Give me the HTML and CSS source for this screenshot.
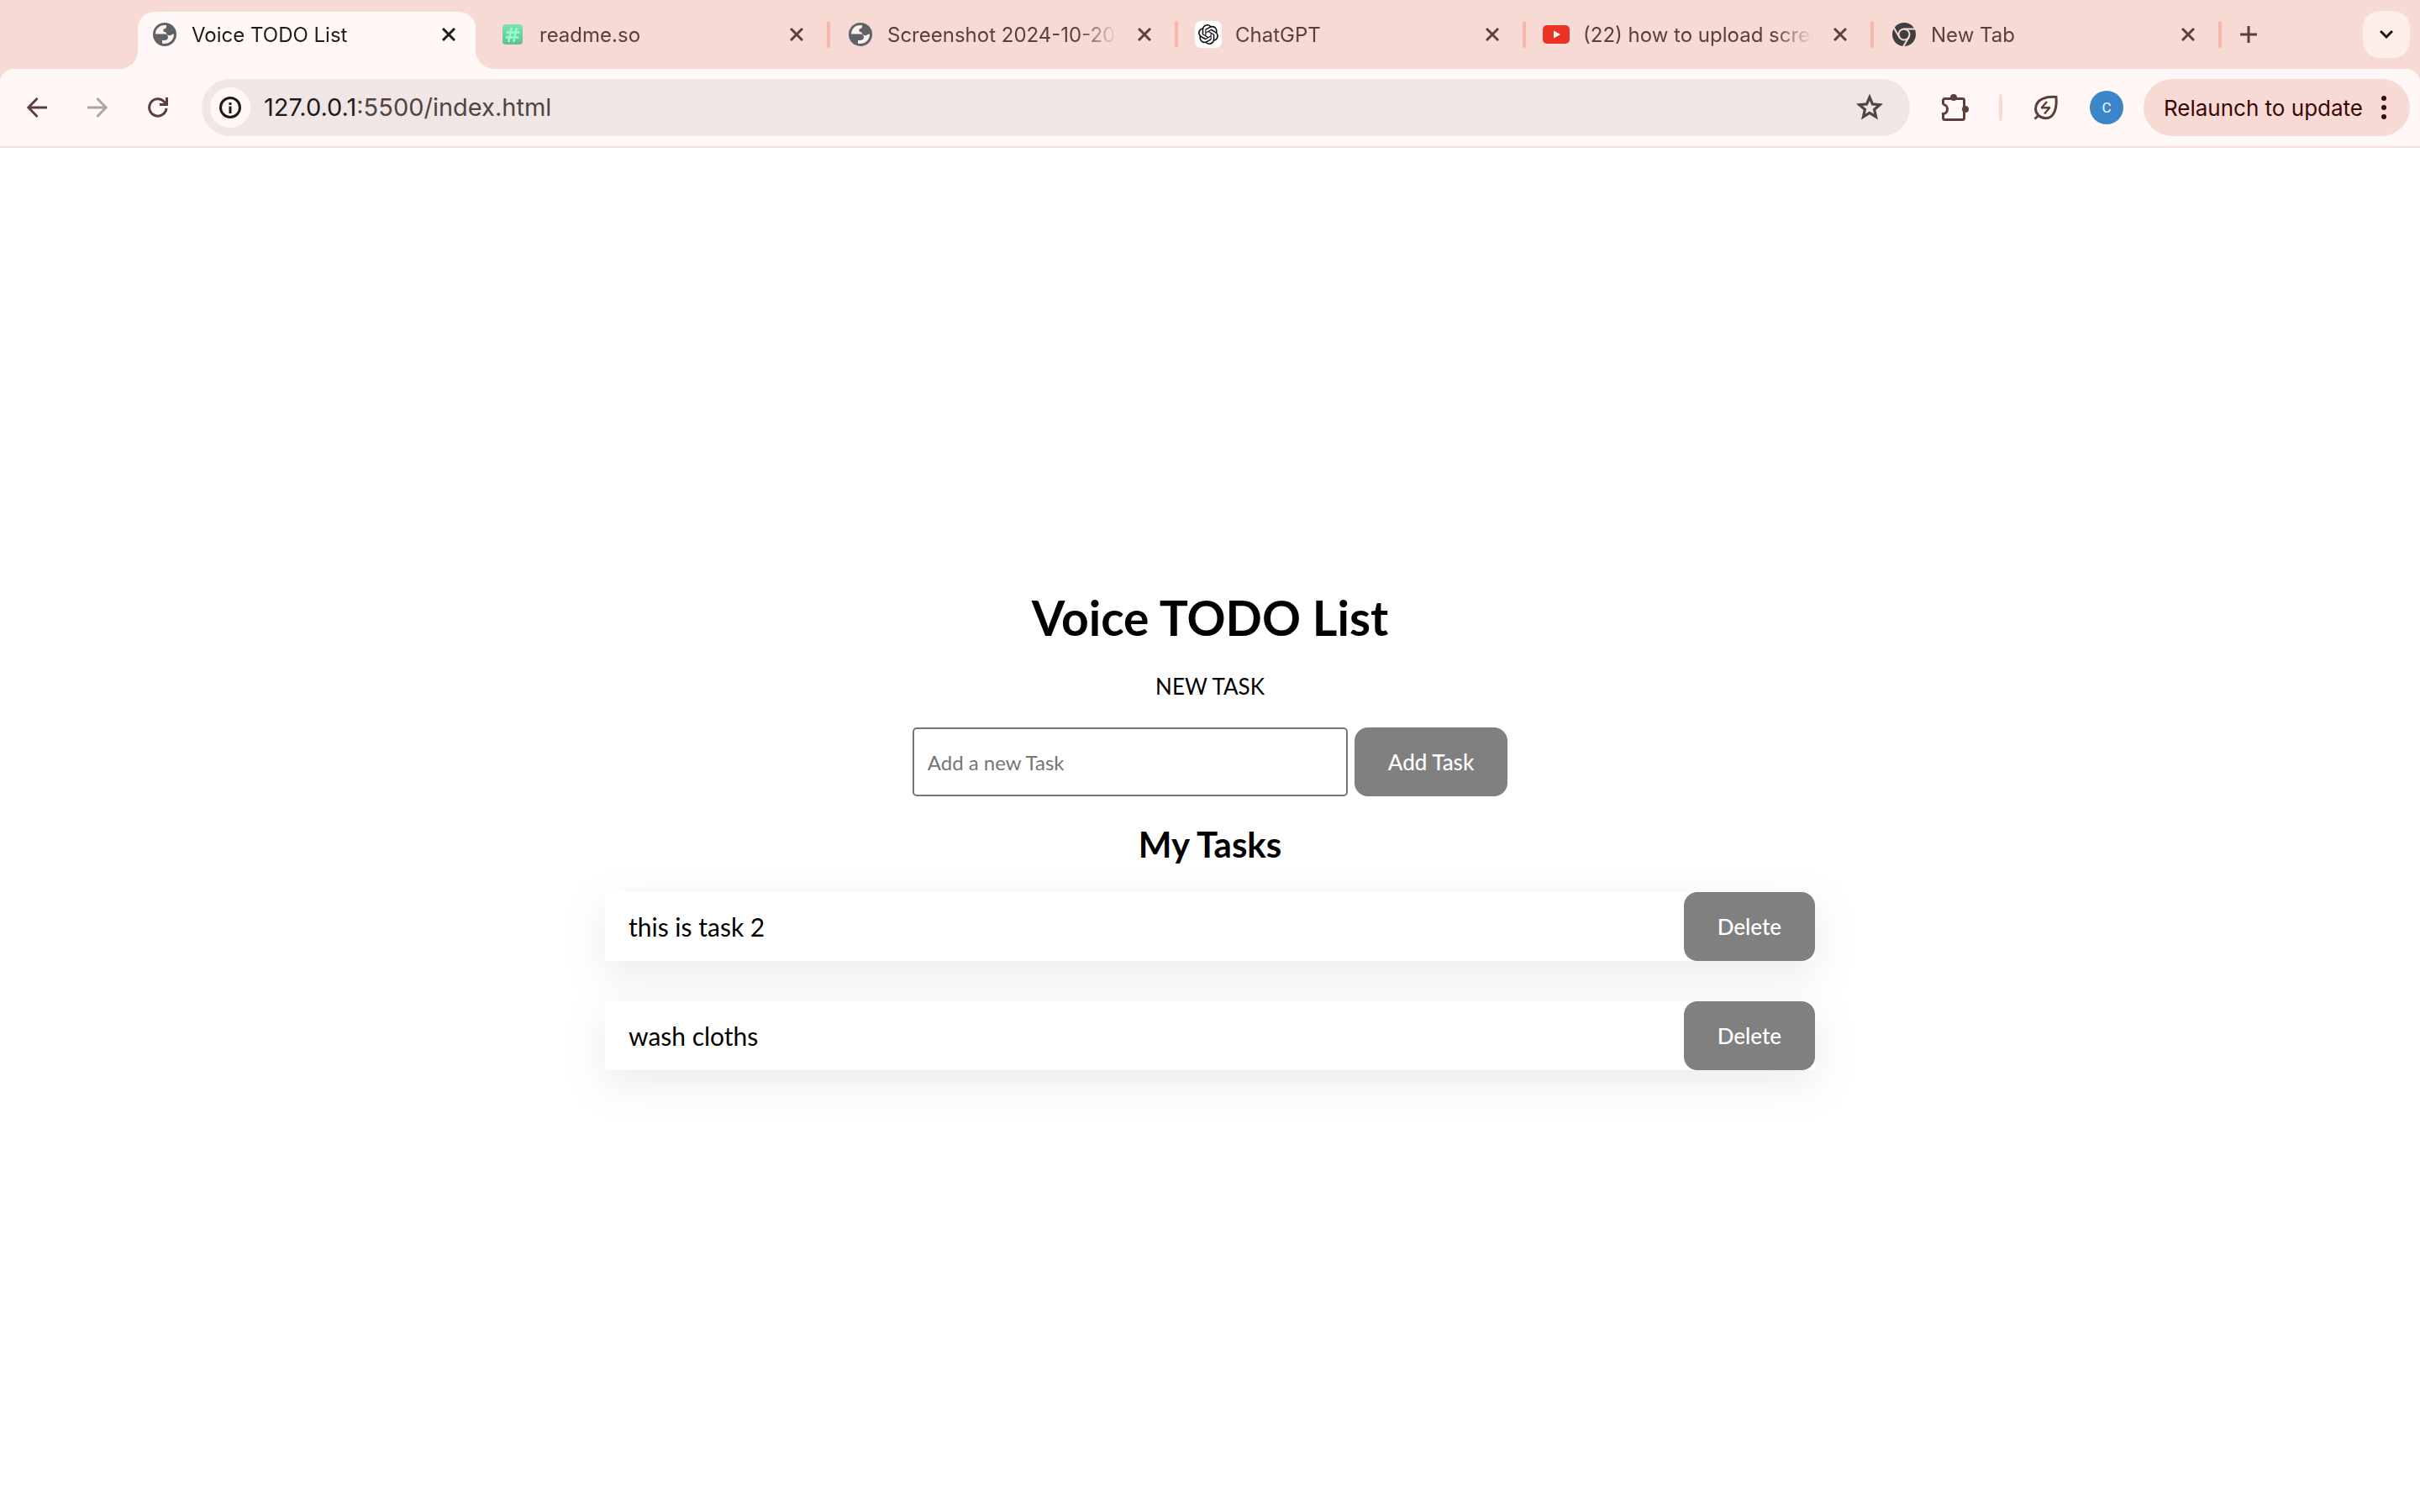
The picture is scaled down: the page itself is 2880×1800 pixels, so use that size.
FILE: index.html
```html
<!DOCTYPE html>
<html lang="en">
<head>
<meta charset="utf-8">
<meta name="viewport" content="width=device-width, initial-scale=1">
<title>Voice TODO List</title>
<link rel="stylesheet" href="styles.css">
</head>
<body>
<svg class="sprite" aria-hidden="true">
  <symbol id="close" viewBox="0 0 16 16"><path d="M1 1l14 14M15 1L1 15" fill="none" stroke="currentColor" stroke-width="3"/></symbol>
  <symbol id="globe" viewBox="0 0 28 28">
    <circle cx="14" cy="14" r="14" fill="#5f6368"/>
    <path class="globe-land" d="M3 13.5C3 7.500 8 3 13.500 3H16C16.500 6 15 7.600 12.500 7.600V9.500C12.500 11 14 11 15.500 11.500C16 14 17.500 15.200 20 15.200C22 15.200 22.500 13.500 25 13.500C25.300 20 20 25.300 13 25.100L11 24.700V21H13C16 21 18 20 18 17.500C18 15 16.500 13.500 14 13.500Z"/>
  </symbol>
</svg>

<header class="browser">
  <nav class="tabs" aria-label="Open tabs">
    <div class="tab tab-active">
      <svg class="favicon" viewBox="-2 -2 32 32"><use href="#globe" width="28" height="28"/></svg>
      <span class="tab-title">Voice TODO List</span>
      <button class="tab-close" aria-label="Close tab"><svg><use href="#close"/></svg></button>
    </div>
    <div class="tab">
      <svg class="favicon" viewBox="0 0 32 32">
        <defs><linearGradient id="mint" x1="0" y1="0" x2="0" y2="1"><stop offset="0" stop-color="#7ee2b3"/><stop offset="1" stop-color="#5fc094"/></linearGradient></defs>
        <rect x="4" y="4" width="24" height="24" rx="4" fill="url(#mint)"/>
        <path d="M14.500 9l-3 15M20.500 9l-3 15M9.500 13.500h14M8.500 19.500h14" fill="none" stroke="#96ffcf" stroke-width="2.500" stroke-linecap="round"/>
      </svg>
      <span class="tab-title">readme.so</span>
      <button class="tab-close" aria-label="Close tab"><svg><use href="#close"/></svg></button>
    </div>
    <div class="tab">
      <svg class="favicon" viewBox="-2 -2 32 32"><use href="#globe" width="28" height="28"/></svg>
      <span class="tab-title">Screenshot 2024-10-20</span>
      <button class="tab-close" aria-label="Close tab"><svg><use href="#close"/></svg></button>
    </div>
    <div class="tab">
      <svg class="favicon" viewBox="0 0 32 32">
        <rect width="32" height="32" rx="7" fill="#fff"/>
        <svg x="4" y="4" width="24" height="24" viewBox="0 0 24 24"><path fill="#111" d="M22.2819 9.8211a5.9847 5.9847 0 0 0-.5157-4.9108 6.0462 6.0462 0 0 0-6.5098-2.9A6.0651 6.0651 0 0 0 4.9807 4.1818a5.9847 5.9847 0 0 0-3.9977 2.9 6.0462 6.0462 0 0 0 .7427 7.0966 5.98 5.98 0 0 0 .511 4.9107 6.051 6.051 0 0 0 6.5146 2.9001A5.9847 5.9847 0 0 0 13.2599 24a6.0557 6.0557 0 0 0 5.7718-4.2058 5.9894 5.9894 0 0 0 3.9977-2.9001 6.0557 6.0557 0 0 0-.7475-7.0729zm-9.022 12.6081a4.4755 4.4755 0 0 1-2.8764-1.0408l.1419-.0804 4.7783-2.7582a.7948.7948 0 0 0 .3927-.6813v-6.7369l2.02 1.1686a.071.071 0 0 1 .038.052v5.5826a4.504 4.504 0 0 1-4.4945 4.4944zm-9.6607-4.1254a4.4708 4.4708 0 0 1-.5346-3.0137l.142.0852 4.783 2.7582a.7712.7712 0 0 0 .7806 0l5.8428-3.3685v2.3324a.0804.0804 0 0 1-.0332.0615L9.74 19.9502a4.4992 4.4992 0 0 1-6.1408-1.6464zM2.3408 7.8956a4.485 4.485 0 0 1 2.3655-1.9728V11.6a.7664.7664 0 0 0 .3879.6765l5.8144 3.3543-2.0201 1.1685a.0757.0757 0 0 1-.071 0l-4.8303-2.7865A4.504 4.504 0 0 1 2.3408 7.872zm16.5963 3.8558L13.1038 8.364 15.1192 7.2a.0757.0757 0 0 1 .071 0l4.8303 2.7913a4.4944 4.4944 0 0 1-.6765 8.1042v-5.6772a.79.79 0 0 0-.407-.667zm2.0107-3.0231l-.142-.0852-4.7735-2.7818a.7759.7759 0 0 0-.7854 0L9.409 9.2297V6.8974a.0662.0662 0 0 1 .0284-.0615l4.8303-2.7866a4.4992 4.4992 0 0 1 6.6802 4.66zM8.3065 12.863l-2.02-1.1638a.0804.0804 0 0 1-.038-.0567V6.0742a4.4992 4.4992 0 0 1 7.3757-3.4537l-.142.0805L8.704 5.459a.7948.7948 0 0 0-.3927.6813zm1.0976-2.3654l2.602-1.4998 2.6069 1.4998v2.9994l-2.5974 1.4997-2.6067-1.4997Z"/></svg>
      </svg>
      <span class="tab-title">ChatGPT</span>
      <button class="tab-close" aria-label="Close tab"><svg><use href="#close"/></svg></button>
    </div>
    <div class="tab">
      <svg class="favicon" viewBox="0 0 32 32"><rect y="5" width="32" height="22" rx="5" fill="#ea3323"/><path d="M13 11.500v9l8-4.500z" fill="#fff"/></svg>
      <span class="tab-title">(22) how to upload scree</span>
      <button class="tab-close" aria-label="Close tab"><svg><use href="#close"/></svg></button>
    </div>
    <div class="tab">
      <svg class="favicon" viewBox="-2 -2 32 32">
        <circle cx="14" cy="14" r="14" fill="#3c4043"/>
        <g fill="none" stroke="#f8dad4" stroke-width="2">
          <circle cx="14" cy="14" r="6.500"/>
          <path d="M14 7.500H28"/>
          <path d="M14 7.500H28" transform="rotate(120 14 14)"/>
          <path d="M14 7.500H28" transform="rotate(240 14 14)"/>
        </g>
      </svg>
      <span class="tab-title">New Tab</span>
      <button class="tab-close" aria-label="Close tab"><svg><use href="#close"/></svg></button>
    </div>
    <button class="new-tab" aria-label="New tab"><svg viewBox="0 0 20 20"><path d="M10 0v20M0 10h20" stroke="currentColor" stroke-width="3"/></svg></button>
    <button class="tab-search" aria-label="Search tabs"><svg viewBox="0 0 16 10"><path d="M1 1l7 7 7-7" fill="none" stroke="currentColor" stroke-width="3"/></svg></button>
  </nav>

  <div class="toolbar">
    <button class="nav-button" aria-label="Back"><svg viewBox="0 0 24 24"><path d="M24 12H2M12.500 1L1.800 12l10.700 11" fill="none" stroke="currentColor" stroke-width="3"/></svg></button>
    <button class="nav-button" aria-label="Forward" disabled><svg viewBox="0 0 24 24"><path d="M0 12h22M11.500 1l10.700 11-10.700 11" fill="none" stroke="currentColor" stroke-width="3"/></svg></button>
    <button class="nav-button" aria-label="Reload"><svg viewBox="0 0 24 24"><path d="M22 13A10.200 10.200 0 1 1 19.500 5.200L22 8" fill="none" stroke="currentColor" stroke-width="3"/><path d="M24 0v10H14V7h7V0z" fill="currentColor"/></svg></button>
    <div class="address-bar">
      <button class="site-info" aria-label="View site information"><svg viewBox="0 0 26 26"><circle cx="13" cy="13" r="11.500" fill="none" stroke="currentColor" stroke-width="3"/><path d="M11.500 11.500h3V20h-3zM11.500 7h3v3h-3z" fill="currentColor"/></svg></button>
      <div class="url" role="textbox" aria-label="Address"><span class="url-host">127.0.0.1</span>:5500/index.html</div>
      <button class="bookmark" aria-label="Bookmark this tab"><svg viewBox="0 0 30 30"><path d="M15 3.500l3.200 7.700 8.300.7-6.300 5.400 1.900 8.200-7.100-4.400-7.100 4.400 1.900-8.200-6.300-5.400 8.300-.7z" fill="none" stroke="currentColor" stroke-width="3"/></svg></button>
    </div>
    <div class="extensions">
      <button class="icon-button" aria-label="Extensions"><svg viewBox="0 0 32 32"><path d="M1.500 12.500V7.500a2 2 0 0 1 2-2h21a2 2 0 0 1 2 2v21a2 2 0 0 1-2 2h-21a2 2 0 0 1-2-2V23.500a5 5.500 0 0 0 0-11" fill="none" stroke="currentColor" stroke-width="3"/><circle cx="14" cy="4" r="4" fill="currentColor"/><circle cx="28" cy="18" r="4" fill="currentColor"/></svg></button>
      <span class="divider"></span>
      <button class="icon-button" aria-label="Energy saver"><svg viewBox="0 0 32 32"><path d="M28 3.500C17 2.500 4 5.500 3.500 17.500 3.500 23.500 9 28.800 15.500 28.800 26 28.800 29 16 28 3.500ZM2.500 29.500L7.500 25" fill="none" stroke="currentColor" stroke-width="3"/><path d="M17 9l-6.500 7.500L20.500 16 14 23.500" fill="none" stroke="currentColor" stroke-width="2.500" stroke-linejoin="bevel"/></svg></button>
      <button class="avatar" aria-label="Profile">C</button>
    </div>
    <button class="relaunch">Relaunch to update<svg viewBox="0 0 6 28"><g fill="currentColor"><circle cx="3" cy="3" r="3"/><circle cx="3" cy="14" r="3"/><circle cx="3" cy="25" r="3"/></g></svg></button>
  </div>
</header>

<main class="todo">
  <h1 class="title">Voice TODO List</h1>
  <label class="new-label" for="new-task">NEW TASK</label>
  <form class="new-form">
    <input class="new-input" id="new-task" type="text" placeholder="Add a new Task">
    <button class="button" type="button">Add Task</button>
  </form>
  <h2 class="subtitle">My Tasks</h2>
  <ul class="tasks">
    <li class="task"><span class="task-name">this is task 2</span><button class="button">Delete</button></li>
    <li class="task"><span class="task-name">wash cloths</span><button class="button">Delete</button></li>
  </ul>
</main>
</body>
</html>
```
FILE: styles.css
```css
* {
  box-sizing: border-box;
}

body {
  margin: 0;
  min-height: 100vh;
  display: flex;
  flex-direction: column;
  background: #fff;
  color: #000;
  font-family: Lato, "Trebuchet MS", sans-serif;
}

button {
  display: flex;
  align-items: center;
  justify-content: center;
  padding: 0;
  border: 0;
  background: none;
  color: inherit;
  font: inherit;
  white-space: nowrap;
}

svg {
  display: block;
}

.sprite {
  position: absolute;
  width: 0;
  height: 0;
}

/* Browser frame */

.browser {
  background: #f8dad4;
  color: #5c3f3a;
  font-family: Inter, sans-serif;
}

.tabs {
  display: flex;
  align-items: center;
  height: 82px;
  padding: 0 12px 0 160px;
}

.tab {
  position: relative;
  display: flex;
  flex: 0 1 414px;
  align-items: center;
  min-width: 0;
  height: 82px;
  padding: 0 20px;
  font-size: 24px;
  line-height: 32px;
}

/* separator on the right edge of each background tab */
.tab:not(.tab-active)::after {
  content: "";
  position: absolute;
  right: 0;
  width: 4px;
  height: 32px;
  border-radius: 2px;
  background: #f5b8ad;
}

.tab-active {
  z-index: 0;
  color: #1f1a19;
}

.tab-active::before {
  content: "";
  position: absolute;
  z-index: -1;
  inset: 14px 8px 0 4px;
  border-radius: 20px 20px 0 0;
  background: #fff8f6;
}

/* flared feet of the active tab */
.tab-active::after {
  content: "";
  position: absolute;
  z-index: -1;
  right: -14px;
  bottom: 0;
  left: -18px;
  height: 22px;
  background:
    radial-gradient(circle at 0 0, transparent 22px, #fff8f6 22px) left / 22px 22px no-repeat,
    radial-gradient(circle at 100% 0, transparent 22px, #fff8f6 22px) right / 22px 22px no-repeat;
}

.favicon {
  flex: none;
  width: 32px;
  height: 32px;
}

.globe-land {
  fill: #fdf1ee;
}

.tab-title {
  flex: 1;
  min-width: 0;
  margin: 0 12px 0 16px;
  padding-top: 2px;
  overflow: hidden;
  white-space: nowrap;
  mask-image: linear-gradient(to left, transparent, #000 48px);
}

.tab-close {
  flex: none;
  width: 40px;
  height: 40px;
}

.tab-close svg {
  width: 16px;
  height: 16px;
}

.new-tab {
  flex: none;
  width: 64px;
  height: 56px;
}

.new-tab svg {
  width: 20px;
  height: 20px;
}

.tab-search {
  flex: none;
  width: 56px;
  height: 56px;
  margin-left: auto;
  border-radius: 20px;
  background: #fdeeea;
  color: #1f1a19;
}

.tab-search svg {
  width: 16px;
  height: 10px;
}

.toolbar {
  display: flex;
  align-items: center;
  height: 94px;
  padding: 0 12px 0 8px;
  border-bottom: 2px solid #f3dfdb;
  border-radius: 16px 16px 0 0;
  background: #fff8f6;
}

.nav-button {
  flex: none;
  width: 72px;
  height: 68px;
}

.nav-button svg {
  width: 24px;
  height: 24px;
}

.nav-button:disabled {
  color: #aea6a4;
}

.address-bar {
  display: flex;
  flex: 1;
  align-items: center;
  min-width: 0;
  height: 68px;
  margin-left: 16px;
  padding: 0 32px 0 10px;
  border-radius: 34px;
  background: #f0e6e6;
  color: #534341;
}

.site-info {
  flex: none;
  width: 48px;
  height: 48px;
  border-radius: 50%;
  background: #fff8f6;
  color: #1f1a19;
}

.site-info svg {
  width: 26px;
  height: 26px;
}

.url {
  flex: 1;
  min-width: 0;
  margin-left: 16px;
  overflow: hidden;
  font-size: 29px;
  line-height: 40px;
  white-space: nowrap;
}

.url-host {
  color: #1f1a19;
}

.bookmark svg {
  width: 32px;
  height: 32px;
}

.extensions {
  display: flex;
  align-items: center;
  gap: 36px;
  padding: 0 24px 0 38px;
}

.icon-button svg {
  width: 32px;
  height: 32px;
}

.divider {
  width: 4px;
  height: 32px;
  border-radius: 2px;
  background: #f8dad4;
}

.avatar {
  width: 40px;
  height: 40px;
  border-radius: 50%;
  background: #3b86cb;
  color: #fff;
  font: 17px Roboto, sans-serif;
}

.relaunch {
  flex: none;
  gap: 22px;
  height: 68px;
  padding: 0 28px 0 24px;
  border-radius: 34px;
  background: #f8dad4;
  color: #3a0906;
  font-size: 26px;
}

.relaunch svg {
  width: 6px;
  height: 28px;
}

/* To-do page */

.todo {
  display: flex;
  flex: 1;
  flex-direction: column;
  align-items: center;
  justify-content: center;
  gap: 32px;
}

.title,
.subtitle {
  margin: 0;
  font-weight: 700;
}

.title {
  font-size: 57px;
  line-height: 66px;
}

.subtitle {
  font-size: 42px;
  line-height: 50px;
}

.new-label {
  font-size: 26px;
  line-height: 34px;
}

.new-form {
  display: flex;
  gap: 8px;
}

.new-input {
  width: 518px;
  height: 82px;
  padding: 0 16px;
  border: 2px solid #767676;
  border-radius: 5px;
  background: #fff;
  color: #000;
  font-family: inherit;
  font-size: 24px;
}

.new-input::placeholder {
  color: #757575;
}

.button {
  flex: none;
  height: 82px;
  padding: 0 40px;
  border-radius: 16px;
  background: #808080;
  color: #fff;
  font-size: 26px;
  font-weight: 500;
}

.tasks {
  display: flex;
  flex-direction: column;
  gap: 48px;
  width: 50%;
  margin: 0;
  padding: 0;
  list-style: none;
}

.task {
  display: flex;
  align-items: center;
  justify-content: space-between;
  padding-left: 28px;
  background: #fff;
  box-shadow: 0 16px 48px rgba(149, 157, 165, 0.2);
}

.task-name {
  font-size: 30px;
  line-height: 36px;
}
```
